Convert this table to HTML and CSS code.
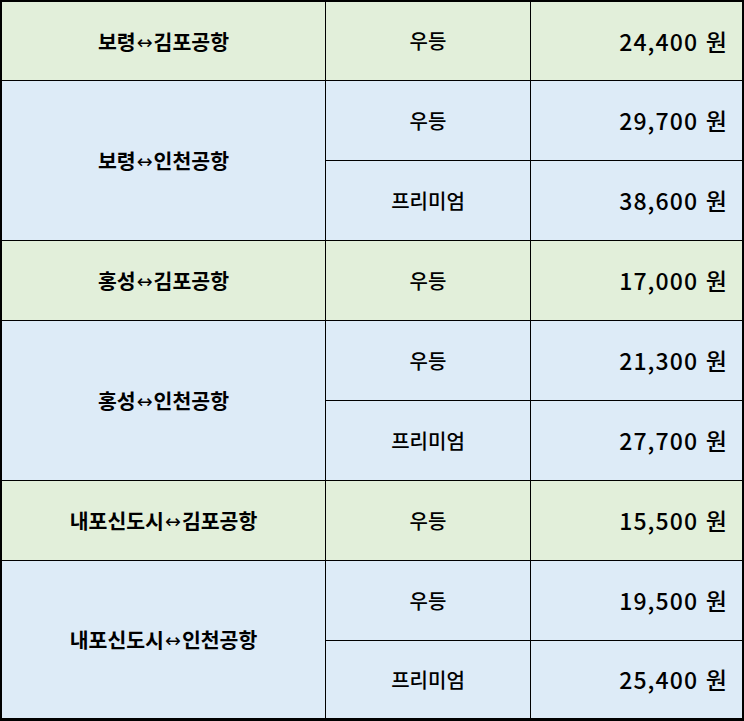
FILE: index.html
```html
<!DOCTYPE html>
<html lang="ko">
<head>
<meta charset="utf-8">
<link rel="stylesheet" href="styles.css">
</head>
<body>
<div class="fare-table">
  <div class="cell route green">보령<span class="arrow">↔</span>김포공항</div>
  <div class="cell cls green">우등</div>
  <div class="cell price green">24,400 원</div>

  <div class="cell route blue span2">보령<span class="arrow">↔</span>인천공항</div>
  <div class="cell cls blue">우등</div>
  <div class="cell price blue">29,700 원</div>
  <div class="cell cls blue">프리미엄</div>
  <div class="cell price blue">38,600 원</div>

  <div class="cell route green">홍성<span class="arrow">↔</span>김포공항</div>
  <div class="cell cls green">우등</div>
  <div class="cell price green">17,000 원</div>

  <div class="cell route blue span2">홍성<span class="arrow">↔</span>인천공항</div>
  <div class="cell cls blue">우등</div>
  <div class="cell price blue">21,300 원</div>
  <div class="cell cls blue">프리미엄</div>
  <div class="cell price blue">27,700 원</div>

  <div class="cell route green">내포신도시<span class="arrow">↔</span>김포공항</div>
  <div class="cell cls green">우등</div>
  <div class="cell price green">15,500 원</div>

  <div class="cell route blue span2">내포신도시<span class="arrow">↔</span>인천공항</div>
  <div class="cell cls blue">우등</div>
  <div class="cell price blue">19,500 원</div>
  <div class="cell cls blue">프리미엄</div>
  <div class="cell price blue">25,400 원</div>
</div>
</body>
</html>
```
FILE: styles.css
```css
html, body {
  margin: 0;
  padding: 0;
  background: #ffffff;
}
body {
  font-family: "Noto Sans CJK KR", "Noto Sans", sans-serif;
  color: #000;
}
.fare-table {
  width: 744px;
  box-sizing: border-box;
  display: grid;
  grid-template-columns: 323px 204px 211px;
  grid-template-rows: 78px repeat(7, 79px) 77px;
  gap: 1px;
  background: #000;
  border: 2px solid #000;
  border-bottom-width: 3px;
}
.cell {
  display: flex;
  align-items: center;
  justify-content: center;
  font-size: 20px;
  line-height: 1;
}
.green { background: #e2efda; }
.blue { background: #ddebf7; }
.span2 { grid-row: span 2; }
.route {
  font-weight: 700;
  font-size: 20.5px;
}
.arrow {
  font-family: "DejaVu Sans", sans-serif;
  font-weight: 400;
  font-size: 19px;
  margin: 0 1px;
  position: relative;
  top: 1px;
}
.cls {
  font-weight: 500;
  font-size: 20px;
}
.price {
  justify-content: flex-end;
  padding-right: 14px;
  font-weight: 500;
  font-size: 23px;
  letter-spacing: 1.1px;
}
```
